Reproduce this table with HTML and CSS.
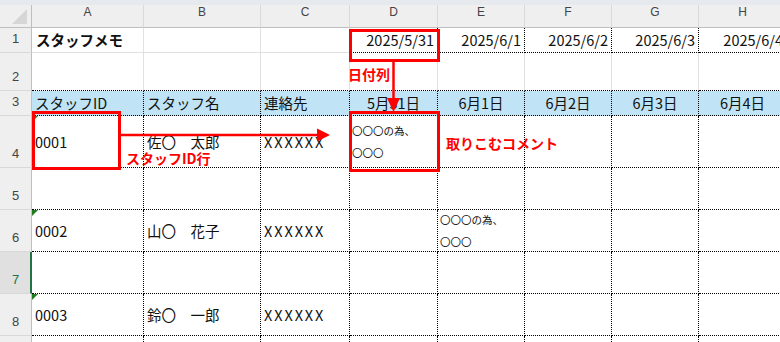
FILE: index.html
```html
<!DOCTYPE html>
<html lang="ja">
<head>
<meta charset="utf-8">
<title>スタッフメモ</title>
<link rel="stylesheet" href="styles.css">
</head>
<body>
<div class="page">
  <div class="band"></div>
  <div class="sheet">
    <div class="corner"><span class="corner-tri"></span></div>
    <div class="ch">A</div>
    <div class="ch">B</div>
    <div class="ch">C</div>
    <div class="ch">D</div>
    <div class="ch">E</div>
    <div class="ch">F</div>
    <div class="ch">G</div>
    <div class="ch">H</div>

    <div class="rh">1</div>
    <div class="c g bold">スタッフメモ</div>
    <div class="c g"></div>
    <div class="c g"></div>
    <div class="c d num">2025/5/31</div>
    <div class="c d num">2025/6/1</div>
    <div class="c d num">2025/6/2</div>
    <div class="c d num">2025/6/3</div>
    <div class="c d num">2025/6/4</div>

    <div class="rh">2</div>
    <div class="c gd"></div>
    <div class="c gd"></div>
    <div class="c gd"></div>
    <div class="c gd"></div>
    <div class="c gd"></div>
    <div class="c gd"></div>
    <div class="c gd"></div>
    <div class="c gd"></div>

    <div class="rh">3</div>
    <div class="c d hd">スタッフID</div>
    <div class="c d hd">スタッフ名</div>
    <div class="c d hd">連絡先</div>
    <div class="c d hd mid">5月31日</div>
    <div class="c d hd mid">6月1日</div>
    <div class="c d hd mid">6月2日</div>
    <div class="c d hd mid">6月3日</div>
    <div class="c d hd mid">6月4日</div>

    <div class="rh">4</div>
    <div class="c d"><span class="flag"></span>0001</div>
    <div class="c d">佐〇　太郎</div>
    <div class="c d"><span class="xs">XXXXXX</span></div>
    <div class="c d memo"><span>〇〇〇の為、</span><span>〇〇〇</span></div>
    <div class="c d"></div>
    <div class="c d"></div>
    <div class="c d"></div>
    <div class="c d"></div>

    <div class="rh">5</div>
    <div class="c d"></div>
    <div class="c d"></div>
    <div class="c d"></div>
    <div class="c d"></div>
    <div class="c d"></div>
    <div class="c d"></div>
    <div class="c d"></div>
    <div class="c d"></div>

    <div class="rh">6</div>
    <div class="c d"><span class="flag"></span>0002</div>
    <div class="c d">山〇　花子</div>
    <div class="c d"><span class="xs">XXXXXX</span></div>
    <div class="c d"></div>
    <div class="c d memo"><span>〇〇〇の為、</span><span>〇〇〇</span></div>
    <div class="c d"></div>
    <div class="c d"></div>
    <div class="c d"></div>

    <div class="rh sel">7</div>
    <div class="c d"></div>
    <div class="c d"></div>
    <div class="c d"></div>
    <div class="c d"></div>
    <div class="c d"></div>
    <div class="c d"></div>
    <div class="c d"></div>
    <div class="c d"></div>

    <div class="rh">8</div>
    <div class="c d"><span class="flag"></span>0003</div>
    <div class="c d">鈴〇　一郎</div>
    <div class="c d"><span class="xs">XXXXXX</span></div>
    <div class="c d"></div>
    <div class="c d"></div>
    <div class="c d"></div>
    <div class="c d"></div>
    <div class="c d"></div>

    <div class="rh"></div>
    <div class="c dv"></div>
    <div class="c dv"></div>
    <div class="c dv"></div>
    <div class="c dv"></div>
    <div class="c dv"></div>
    <div class="c dv"></div>
    <div class="c dv"></div>
    <div class="c dv"></div>
  </div>

  <svg class="overlay" width="780" height="342" viewBox="0 0 780 342" xmlns="http://www.w3.org/2000/svg">
    <rect x="350.5" y="30.5" width="88" height="30" fill="none" stroke="#ff0000" stroke-width="3"/>
    <rect x="350.5" y="112.5" width="88" height="58" fill="none" stroke="#ff0000" stroke-width="3"/>
    <rect x="33.5" y="112.5" width="86" height="56" fill="none" stroke="#ff0000" stroke-width="3"/>
    <line x1="393.5" y1="62" x2="393.5" y2="100" stroke="#ff0000" stroke-width="2.5"/>
    <polygon points="387,98 400,98 393.5,112" fill="#ff0000"/>
    <line x1="121" y1="135" x2="319" y2="135" stroke="#ff0000" stroke-width="2.5"/>
    <polygon points="317,128.5 317,141.5 330,135" fill="#ff0000"/>
  </svg>
  <span class="note note-date">日付列</span>
  <span class="note note-id">スタッフID行</span>
  <span class="note note-comment">取りこむコメント</span>
</div>
</body>
</html>
```

FILE: styles.css
```css
* { box-sizing: border-box; margin: 0; padding: 0; }
html, body { width: 780px; height: 342px; overflow: hidden; background: #ffffff; }
body { font-family: "Noto Sans CJK JP", "Noto Sans", sans-serif; color: #111; }

.page { position: relative; width: 780px; height: 342px; overflow: hidden; }
.band { height: 5px; background: #e6eaee; }

.sheet {
  display: grid;
  grid-template-columns: 32px 112px 117px 89px 88px 87px 87px 87px 88px;
  grid-template-rows: 23px 25px 38px 25px 52px 42px 42px 42px 42px 20px;
  width: 787px;
}

.corner {
  position: relative;
  background: #efefef;
  border-right: 1px solid #bfbfbf;
  border-bottom: 1px solid #bfbfbf;
}
.corner-tri {
  position: absolute;
  right: 4px;
  bottom: 3px;
  width: 0;
  height: 0;
  border-left: 15px solid transparent;
  border-bottom: 15px solid #d6d6d6;
}

.ch {
  background: #efefef;
  border-right: 1px solid #d9d9d9;
  border-bottom: 1px solid #bfbfbf;
  display: flex;
  justify-content: center;
  align-items: flex-start;
  font-family: "Liberation Sans", Arial, sans-serif;
  font-size: 12px;
  line-height: 14px;
  color: #444;
}

.rh {
  background: #efefef;
  border-right: 1px solid #bfbfbf;
  border-bottom: 1px solid #d9d9d9;
  display: flex;
  justify-content: center;
  align-items: flex-end;
  padding-bottom: 5px;
  font-family: "Liberation Sans", Arial, sans-serif;
  font-size: 13px;
  line-height: 16px;
  color: #444;
}
.rh.sel {
  background: #e0e0e0;
  border-right: 2px solid #217346;
  padding-left: 1px;
  color: #217346;
}

.c {
  position: relative;
  display: flex;
  align-items: center;
  padding: 0 3px;
  font-size: 14.5px;
  line-height: 18px;
  white-space: nowrap;
  overflow: hidden;
}
.g { border-right: 1px solid #e1e1e1; border-bottom: 1px solid #e1e1e1; }
.gd { border-right: 1px solid #e1e1e1; border-bottom: 1px dotted #000; }
.d { border-right: 1px dotted #000; border-bottom: 1px dotted #000; }
.dv { border-right: 1px dotted #000; }

.bold { font-weight: 700; padding-left: 4px; }
.num { justify-content: flex-end; overflow: visible; }
.hd { background: #c0e4f5; }
.mid { justify-content: center; }

.xs { letter-spacing: 1.9px; }

.memo {
  flex-direction: column;
  align-items: flex-start;
  justify-content: center;
  padding: 0 2px;
  font-size: 10.5px;
  line-height: 22px;
  overflow: visible;
}
.memo span { display: block; flex: none; }

.flag {
  position: absolute;
  left: 0;
  top: 0;
  width: 0;
  height: 0;
  border-top: 6px solid #1e7b1e;
  border-right: 6px solid transparent;
}

.overlay { position: absolute; left: 0; top: 0; pointer-events: none; }

.note {
  position: absolute;
  font-family: "Noto Sans CJK JP", "Noto Sans", sans-serif;
  font-weight: 700;
  font-size: 14px;
  line-height: 16px;
  color: #ff0000;
  white-space: nowrap;
}
.note-date { left: 348px; top: 66px; }
.note-id { left: 126px; top: 150px; }
.note-comment { left: 446px; top: 135px; }
```
